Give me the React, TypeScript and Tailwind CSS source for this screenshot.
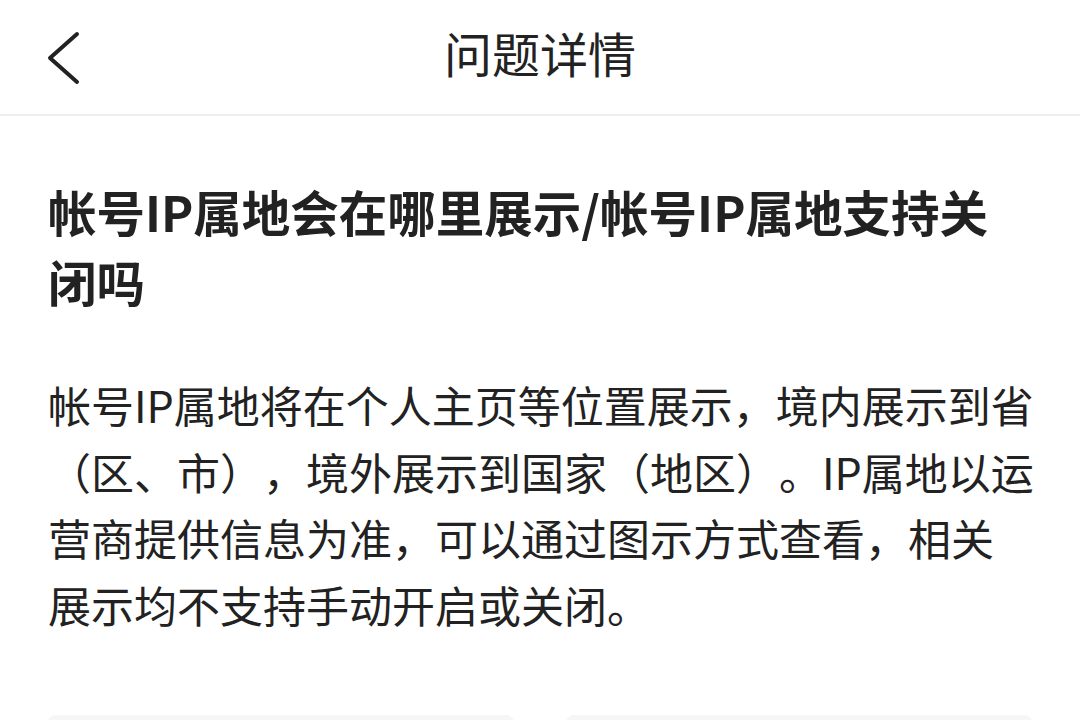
const cjk = {
  fontFamily: '"Noto Sans CJK SC", "Noto Sans", sans-serif',
};

const BackIcon = () => (
  <svg width="36" height="56" viewBox="0 0 36 56" fill="none">
    <path
      d="M30 4 L3 28 L30 52"
      stroke="#222222"
      strokeWidth="4"
      strokeLinecap="round"
      strokeLinejoin="round"
    />
  </svg>
);

export default function App() {
  return (
    <div className="w-[1080px] h-[720px] bg-white overflow-hidden" style={cjk}>
      {/* Top bar */}
      <header className="relative h-[116px] flex items-center justify-center border-b-2 border-[#eeeeee]">
        <button className="absolute left-[47px] top-[30px]">
          <BackIcon />
        </button>
        <h1 className="text-[48px] leading-none text-[#222222] mb-[10px]">问题详情</h1>
      </header>

      <main className="pl-12 pr-[45px] pt-[60px] [text-spacing-trim:space-all]">
        <h2 className="text-[48.5px] leading-[70px] font-bold text-[#222222]">
          帐号IP属地会在哪里展示/帐号IP属地支持关闭吗
        </h2>
        <p className="mt-[55px] text-[43px] leading-[66.5px] text-[#222222]">
          帐号IP属地将在个人主页等位置展示，境内展示到省（区、市），境外展示到国家（地区）。IP属地以运营商提供信息为准，可以通过图示方式查看，相关展示均不支持手动开启或关闭。
        </p>

        {/* Feedback cards, cut off at the bottom of the view */}
        <div className="mt-[78px] mr-[3px] grid grid-cols-2 gap-[52px]">
          <div className="h-[60px] rounded-lg bg-[#f6f6f6]" />
          <div className="h-[60px] rounded-lg bg-[#f6f6f6]" />
        </div>
      </main>
    </div>
  );
}
